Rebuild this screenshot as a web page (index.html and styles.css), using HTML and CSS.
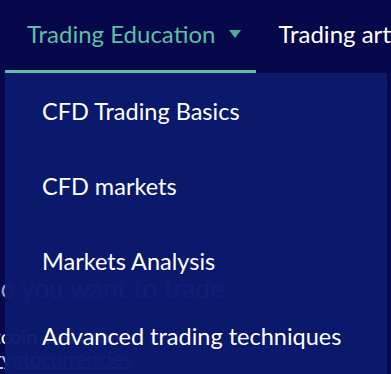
FILE: index.html
```html
<!DOCTYPE html>
<html lang="en">
<head>
  <meta charset="UTF-8">
  <title>Trading Education</title>
  <link rel="stylesheet" href="styles.css">
</head>
<body>
  <nav class="main-nav">
    <div class="nav-item active">
      <a href="#" class="nav-link">Trading Education <span class="caret"></span></a>
      <ul class="dropdown">
        <li><a href="#">CFD Trading Basics</a></li>
        <li><a href="#">CFD markets</a></li>
        <li><a href="#">Markets Analysis</a></li>
        <li><a href="#">Advanced trading techniques</a></li>
      </ul>
    </div>
    <div class="nav-item">
      <a href="#" class="nav-link">Trading articles</a>
    </div>
  </nav>

  <div class="page-content">
    <h2 class="content-title">Do you want to trade</h2>
    <p class="content-text coin">Bitcoin and other</p>
    <p class="content-text crypto"><a href="#">Cryptocurrencies</a></p>
  </div>
</body>
</html>
```

FILE: styles.css
```css
body {
  margin: 0;
  background: #07074b;
  font-family: Lato, "Liberation Sans", sans-serif;
  color: #fff;
  overflow: hidden;
  height: 374px;
}

.main-nav {
  display: flex;
  height: 73px;
  padding-left: 5px;
  white-space: nowrap;
}

.nav-item {
  position: relative;
  display: flex;
}

.nav-link {
  display: flex;
  align-items: center;
  padding: 0 15px 3px 22px;
  font-size: 24px;
  color: #fff;
  text-decoration: none;
  border-bottom: 3px solid transparent;
}

.nav-item.active .nav-link {
  color: #5cbfa3;
  border-bottom-color: #5cbfa3;
}

.caret {
  width: 0;
  height: 0;
  margin-left: 14px;
  border-left: 6px solid transparent;
  border-right: 6px solid transparent;
  border-top: 8px solid #4fae95;
}

.dropdown {
  position: absolute;
  top: 73px;
  left: 0;
  width: 382px;
  height: 301px;
  margin: 0;
  padding: 0;
  list-style: none;
  background: rgba(11, 26, 110, 0.97);
  z-index: 2;
}

.dropdown li a {
  display: flex;
  align-items: center;
  height: 75px;
  padding-left: 37px;
  font-size: 23.5px;
  color: #fff;
  text-decoration: none;
}

.page-content {
  padding-top: 199px;
}

.content-title {
  margin: 0 0 21px -19px;
  font-size: 26px;
  font-weight: 400;
  color: #9b9bc4;
}

.content-text {
  margin: 0;
  font-size: 20px;
  line-height: 22px;
  color: #fff;
}

.content-text.coin {
  margin-left: -24px;
}

.content-text.crypto {
  margin-left: -19px;
}

.content-text a {
  color: #b8c4f0;
}
```
